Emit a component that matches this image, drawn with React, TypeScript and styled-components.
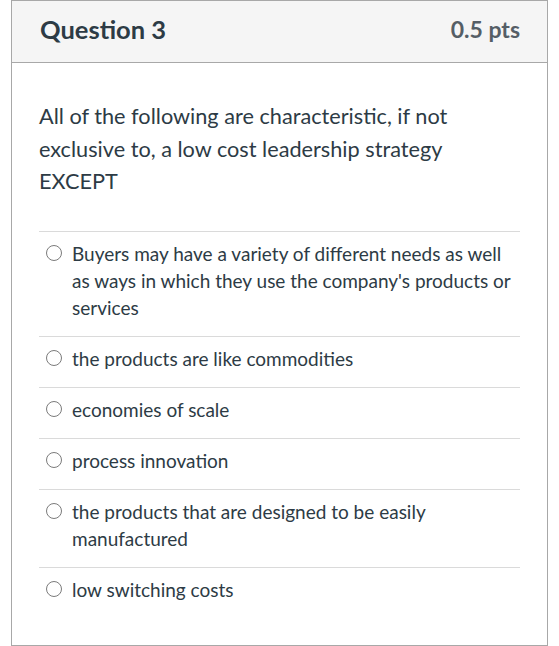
import React from 'react';
import styled, { createGlobalStyle } from 'styled-components';

const GlobalStyle = createGlobalStyle`
  html, body {
    margin: 0;
    padding: 0;
    background: #ffffff;
  }
  body {
    font-family: Lato, "Open Sans", sans-serif;
    color: #2d3b45;
  }
`;

const Page = styled.div`
  padding: 0 11px 0 11px;
  width: 559px;
  box-sizing: border-box;
`;

const Card = styled.div`
  width: 537px;
  height: 646px;
  box-sizing: border-box;
  border: 1px solid #a8a8a8;
  display: flex;
  flex-direction: column;
`;

const Header = styled.div`
  height: 62px;
  box-sizing: border-box;
  background: #f5f5f5;
  border-bottom: 1px solid #a8a8a8;
  display: flex;
  align-items: center;
  justify-content: space-between;
  padding: 0 27px 5px 28px;
`;

const Title = styled.h2`
  margin: 0;
  font-size: 25.5px;
  font-weight: 700;
  color: #2d3b45;
`;

const Points = styled.span`
  font-size: 23px;
  font-weight: 700;
  color: #555e66;
`;

const Body = styled.div`
  padding: 37px 27px 0 27px;
`;

const QuestionText = styled.p`
  margin: 0 0 33px 0;
  font-size: 21.7px;
  line-height: 32.5px;
  color: #2d3b45;
`;

const Answers = styled.div`
  display: flex;
  flex-direction: column;
`;

const AnswerRow = styled.label`
  display: flex;
  align-items: flex-start;
  gap: 10px;
  border-top: 1px solid #dadada;
  padding: 8px 0 15px 7px;
  cursor: pointer;
`;

const Radio = styled.span`
  flex: none;
  width: 16px;
  height: 16px;
  margin-top: 5.5px;
  box-sizing: border-box;
  border: 1.5px solid #7b7b7b;
  border-radius: 50%;
  background: #fff;
`;

const AnswerText = styled.span`
  font-size: 19px;
  line-height: 27px;
  color: #2d3b45;
`;

const answers = [
  "Buyers may have a variety of different needs as well as ways in which they use the company's products or services",
  'the products are like commodities',
  'economies of scale',
  'process innovation',
  'the products that are designed to be easily manufactured',
  'low switching costs',
];

export default function App() {
  return (
    <>
      <GlobalStyle />
      <Page>
        <Card>
          <Header>
            <Title>Question 3</Title>
            <Points>0.5 pts</Points>
          </Header>
          <Body>
            <QuestionText>
              All of the following are characteristic, if not exclusive to, a low cost leadership strategy
              EXCEPT
            </QuestionText>
            <Answers>
              {answers.map((a) => (
                <AnswerRow key={a}>
                  <Radio />
                  <AnswerText>{a}</AnswerText>
                </AnswerRow>
              ))}
            </Answers>
          </Body>
        </Card>
      </Page>
    </>
  );
}
